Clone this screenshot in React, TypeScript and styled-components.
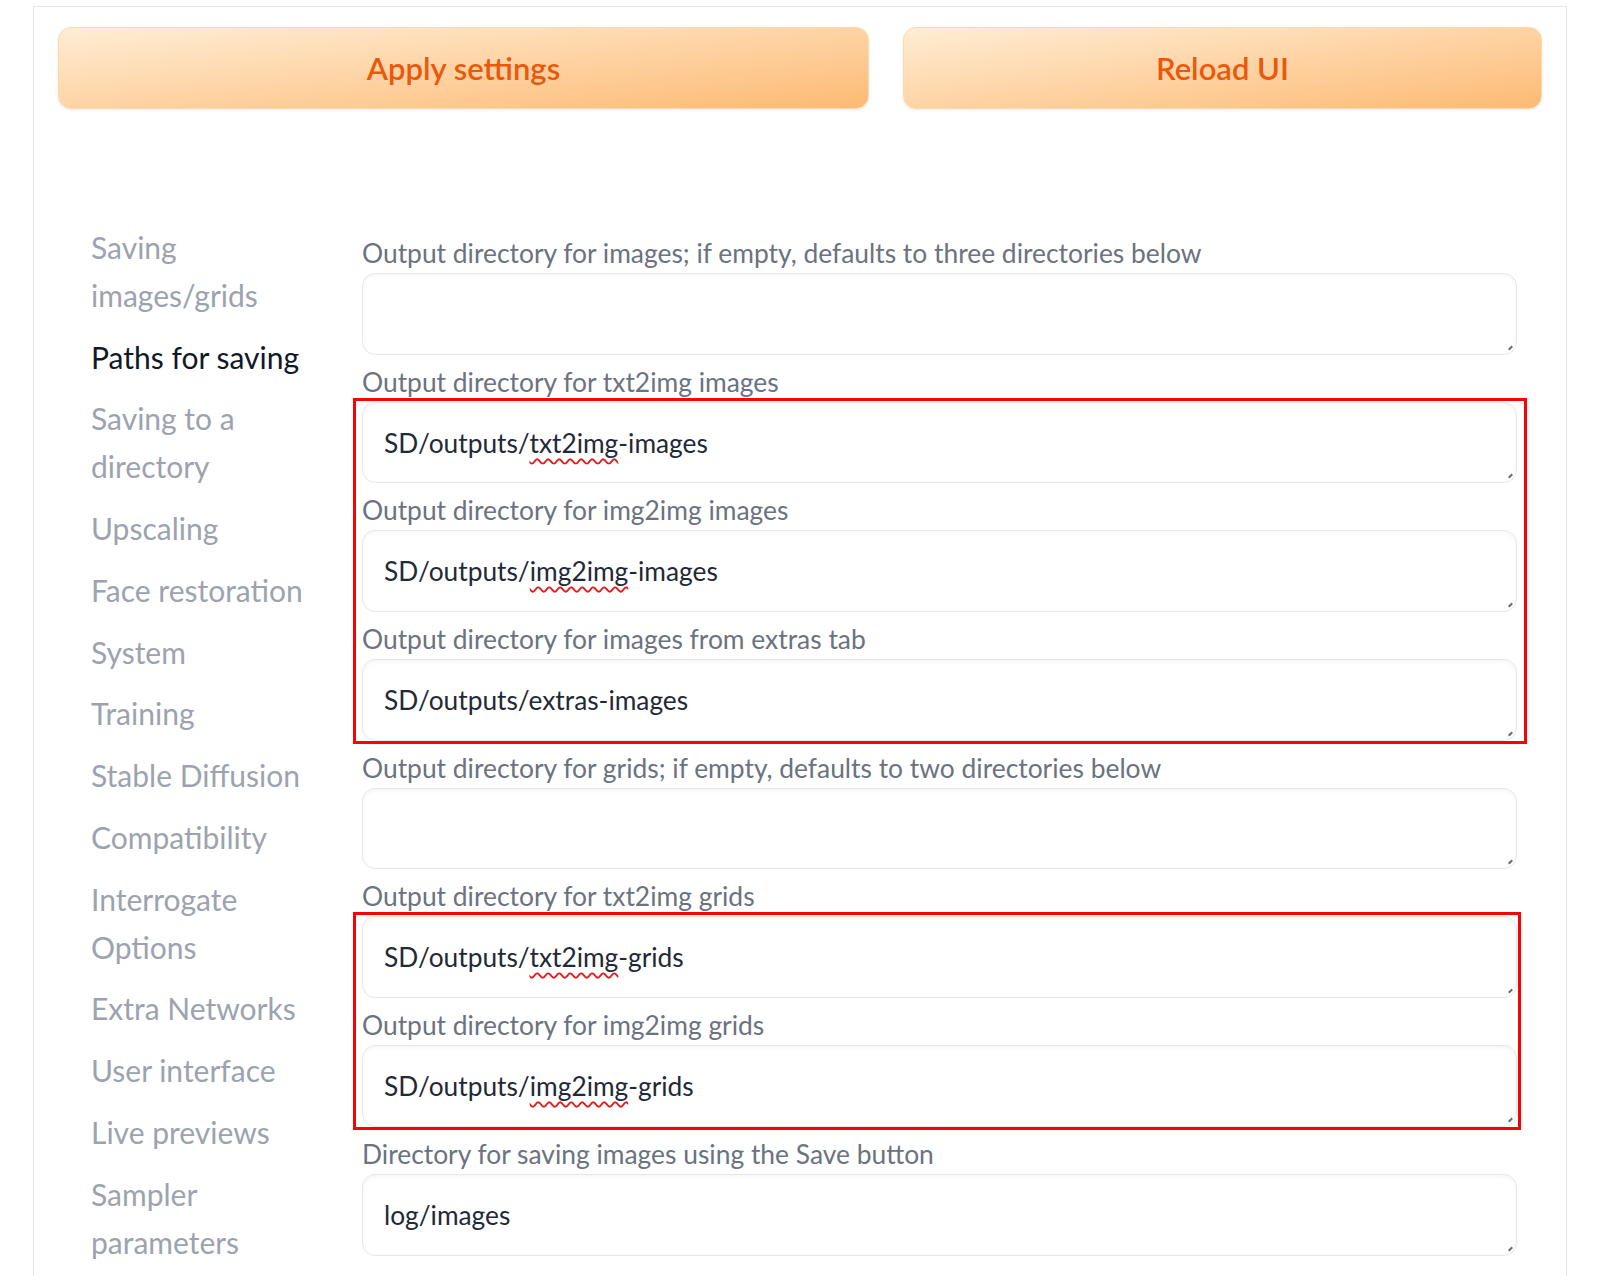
import React from "react";
import styled, { createGlobalStyle } from "styled-components";

const GlobalStyle = createGlobalStyle`
  html, body { margin: 0; padding: 0; background: #ffffff; }
  body { font-family: "Lato", "Noto Sans", "Liberation Sans", sans-serif; }
  * { box-sizing: border-box; }
`;

const Page = styled.div`
  padding: 6px 33px 0 33px;
  height: 1276px;
  overflow: hidden;
`;

const Panel = styled.div`
  border: 1px solid #e5e7eb;
  border-bottom: none;
  padding: 20px 24px 0 24px;
  min-height: 1300px;
`;

const ButtonRow = styled.div`
  display: grid;
  grid-template-columns: 811px 1fr;
  gap: 34px;
`;

const PrimaryButton = styled.button`
  height: 82px;
  border-radius: 13px;
  border: 1px solid #fed7aa;
  background: linear-gradient(to bottom right, #ffedd5, #fdba74);
  color: #ea580c;
  font-family: "Lato", "Noto Sans", sans-serif;
  font-size: 31px;
  font-weight: 600;
  box-shadow: 0 1px 3px rgba(0, 0, 0, 0.08);
  cursor: pointer;
`;

const Content = styled.div`
  display: grid;
  grid-template-columns: 271px 1155px;
  margin-top: 115px;
  padding-left: 33px;
`;

const Sidebar = styled.nav`
  display: flex;
  flex-direction: column;
  gap: 14px;
`;

const NavItem = styled.div<{ $active?: boolean }>`
  font-size: 30px;
  line-height: 47.8px;
  color: ${(p) => (p.$active ? "#111827" : "#9ca3af")};
  width: 232px;
`;

const Fields = styled.div`
  display: flex;
  flex-direction: column;
  padding-top: 2px;
`;

const FieldWrap = styled.div`
  display: flex;
  flex-direction: column;
`;

const Label = styled.div`
  font-size: 26.4px;
  line-height: 32px;
  padding-top: 11px;
  margin-bottom: 4px;
  color: #6b7280;
  white-space: nowrap;
`;

const Box = styled.div`
  position: relative;
  height: 81.7px;
  border: 1px solid #e5e7eb;
  border-radius: 13px;
  background: #ffffff;
  box-shadow: inset 0 2px 4px rgba(0, 0, 0, 0.04);
  padding: 0 21px;
  display: flex;
  align-items: center;
  font-size: 26.3px;
  color: #1f2937;
  &::after {
    content: "";
    position: absolute;
    right: 3px;
    bottom: 5px;
    width: 5px;
    height: 2px;
    background: #6b6b6b;
    transform: rotate(-45deg);
  }
`;

const Misspelled = styled.span`
  text-decoration: underline wavy #e11d1d;
  text-decoration-thickness: 1.5px;
  text-underline-offset: 5px;
`;

const Highlight = styled.div<{ $right: number }>`
  position: relative;
  &::after {
    content: "";
    position: absolute;
    top: 43px;
    left: -9px;
    right: ${(p) => -p.$right}px;
    bottom: -3px;
    border: 3px solid #ff0000;
    pointer-events: none;
  }
`;

type FieldProps = { label: string; value?: React.ReactNode };

const Field: React.FC<FieldProps> = ({ label, value }) => (
  <FieldWrap>
    <Label>{label}</Label>
    <Box>{value}</Box>
  </FieldWrap>
);

const navItems: { text: string; active?: boolean }[] = [
  { text: "Saving images/grids" },
  { text: "Paths for saving", active: true },
  { text: "Saving to a directory" },
  { text: "Upscaling" },
  { text: "Face restoration" },
  { text: "System" },
  { text: "Training" },
  { text: "Stable Diffusion" },
  { text: "Compatibility" },
  { text: "Interrogate Options" },
  { text: "Extra Networks" },
  { text: "User interface" },
  { text: "Live previews" },
  { text: "Sampler parameters" },
];

export default function App() {
  return (
    <>
      <GlobalStyle />
      <Page>
        <Panel>
          <ButtonRow>
            <PrimaryButton>Apply settings</PrimaryButton>
            <PrimaryButton>Reload UI</PrimaryButton>
          </ButtonRow>
          <Content>
            <Sidebar>
              {navItems.map((n) => (
                <NavItem key={n.text} $active={n.active}>
                  {n.text}
                </NavItem>
              ))}
            </Sidebar>
            <Fields>
              <Field label="Output directory for images; if empty, defaults to three directories below" />
              <Highlight $right={10}>
                <Field
                  label="Output directory for txt2img images"
                  value={
                    <span>
                      SD/outputs/<Misspelled>txt2img</Misspelled>-images
                    </span>
                  }
                />
                <Field
                  label="Output directory for img2img images"
                  value={
                    <span>
                      SD/outputs/<Misspelled>img2img</Misspelled>-images
                    </span>
                  }
                />
                <Field label="Output directory for images from extras tab" value="SD/outputs/extras-images" />
              </Highlight>
              <Field label="Output directory for grids; if empty, defaults to two directories below" />
              <Highlight $right={4}>
                <Field
                  label="Output directory for txt2img grids"
                  value={
                    <span>
                      SD/outputs/<Misspelled>txt2img</Misspelled>-grids
                    </span>
                  }
                />
                <Field
                  label="Output directory for img2img grids"
                  value={
                    <span>
                      SD/outputs/<Misspelled>img2img</Misspelled>-grids
                    </span>
                  }
                />
              </Highlight>
              <Field label="Directory for saving images using the Save button" value="log/images" />
            </Fields>
          </Content>
        </Panel>
      </Page>
    </>
  );
}
